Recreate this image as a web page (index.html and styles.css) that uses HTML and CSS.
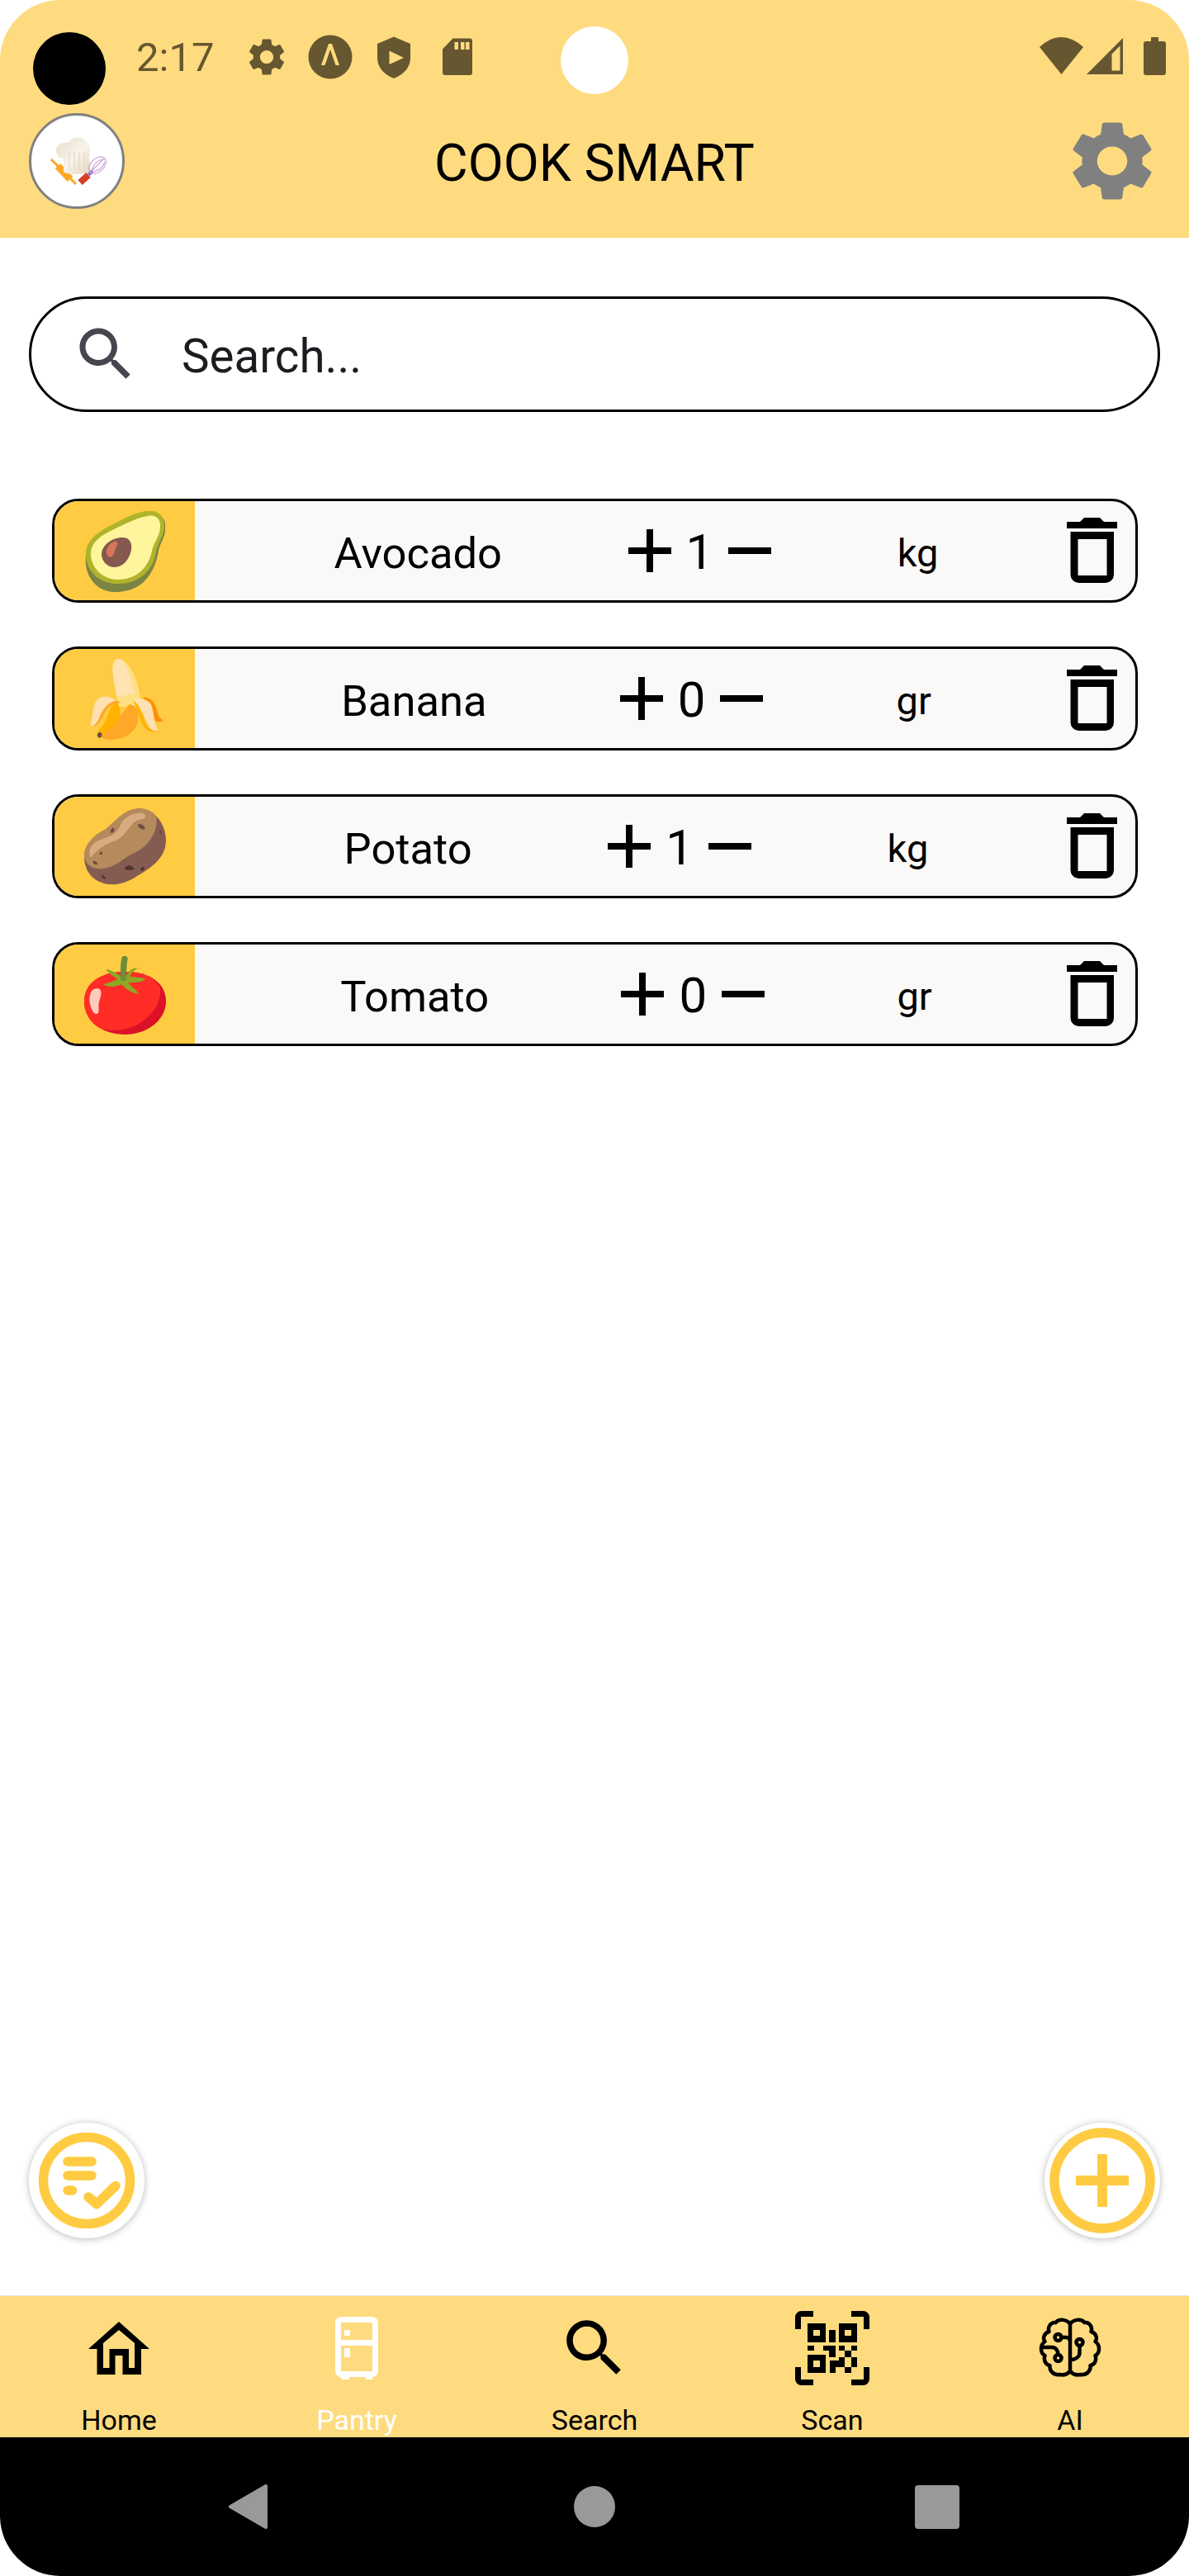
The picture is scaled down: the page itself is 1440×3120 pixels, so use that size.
FILE: index.html
```html
<!DOCTYPE html>
<html lang="en">
<head>
<meta charset="utf-8">
<title>Cook Smart</title>
<link rel="stylesheet" href="styles.css">
</head>
<body>
<svg class="defs" width="0" height="0">
  <symbol id="gear" viewBox="0 0 24 24" preserveAspectRatio="none"><path d="M19.14 12.94c.04-.3.06-.61.06-.94 0-.32-.02-.64-.07-.94l2.03-1.58c.18-.14.23-.41.12-.61l-1.92-3.32c-.12-.22-.37-.29-.59-.22l-2.39.96c-.5-.38-1.03-.7-1.62-.94l-.36-2.54c-.04-.24-.24-.41-.48-.41h-3.84c-.24 0-.43.17-.47.41l-.36 2.54c-.59.24-1.13.57-1.62.94l-2.39-.96c-.22-.08-.47 0-.59.22L2.74 8.87c-.12.21-.08.47.12.61l2.03 1.58c-.05.3-.09.63-.09.94s.02.64.07.94l-2.03 1.58c-.18.14-.23.41-.12.61l1.92 3.32c.12.22.37.29.59.22l2.39-.96c.5.38 1.03.7 1.62.94l.36 2.54c.05.24.24.41.48.41h3.84c.24 0 .44-.17.47-.41l.36-2.54c.59-.24 1.13-.56 1.62-.94l2.39.96c.22.08.47 0 .59-.22l1.92-3.32c.12-.22.07-.47-.12-.61l-2.01-1.58zM12 15.6c-1.98 0-3.6-1.62-3.6-3.6s1.62-3.6 3.6-3.6 3.6 1.62 3.6 3.6-1.62 3.6-3.6 3.6z"/></symbol>
  <symbol id="search" viewBox="0 0 24 24"><path d="M15.5 14h-.79l-.28-.27C15.41 12.59 16 11.11 16 9.5 16 5.91 13.09 3 9.5 3S3 5.91 3 9.5 5.91 16 9.5 16c1.61 0 3.09-.59 4.23-1.57l.27.28v.79l5 4.99L20.49 19l-4.99-5zm-6 0C7.01 14 5 11.99 5 9.5S7.01 5 9.5 5 14 7.01 14 9.5 11.99 14 9.5 14z"/></symbol>
  <symbol id="plus" viewBox="0 0 52 52"><path d="M22 0h8v22h22v8H30v22h-8V30H0v-8h22z"/></symbol>
  <symbol id="minus" viewBox="0 0 52 52"><path d="M0 22h52v8H0z"/></symbol>
  <symbol id="trash" viewBox="0 0 61 79"><path d="M0 5h16l5-5h19l5 5h16v8H0z"/><path fill-rule="evenodd" d="M4.500 17H57v52a10 10 0 0 1-10 10H14.500a10 10 0 0 1-10-10zM13.500 26v44h35V26z"/></symbol>
</svg>

<div class="screen">
  <header class="header">
    <div class="status">
      <span class="camera"></span>
      <span class="pill"></span>
      <span class="time">2:17</span>
      <div class="status-icons">
        <svg class="status-icon"><use href="#gear"/></svg>
        <svg class="status-icon" viewBox="0 0 54 54"><circle cx="27" cy="27" r="26.500"/><path class="cut" d="M25 11h4l9 26h-4.500L27 18l-6.500 19H16z"/></svg>
        <svg class="status-icon" viewBox="0 0 54 54"><path d="M27 2.500 47 11v17c0 12-8 20-20 25C15 48 7 40 7 28V11z"/><path class="cut" d="M21.500 19.500 39 28 21.500 36z"/></svg>
        <svg class="status-icon" viewBox="0 0 54 54"><path d="M21.500 4.500H42a3 3 0 0 1 3 3V46a3 3 0 0 1-3 3H12a3 3 0 0 1-3-3V17.500z"/><path class="cut" d="M23.500 9h4.500v9h-4.500zM31 9h4.500v9H31zM37 9h4.500v9H37z"/></svg>
      </div>
      <div class="status-right">
        <svg class="wifi" viewBox="0 0 53 45"><path d="M0 12Q26.500-12 53 12L26.500 45z"/></svg>
        <svg class="signal" viewBox="0 0 44 44"><path d="M0 44 44 0v44z"/><path class="cut" d="M30.500 19.500l10-10v30h-10z"/></svg>
        <svg class="battery" viewBox="0 0 27 46"><path d="M9 0h9v5h6a3 3 0 0 1 3 3v35a3 3 0 0 1-3 3H3a3 3 0 0 1-3-3V8a3 3 0 0 1 3-3h6z"/></svg>
      </div>
    </div>
    <div class="appbar">
      <div class="logo">
        <svg class="logo-art" viewBox="15 13 110 110">
          <defs>
            <linearGradient id="hat" x1="0" y1="0" x2="1" y2="1"><stop offset="0" stop-color="#e6dcc8"/><stop offset=".55" stop-color="#f8f4ec"/><stop offset="1" stop-color="#e2d4bb"/></linearGradient>
          </defs>
          <g transform="translate(27 23)">
            <path class="pin-thin" d="M12 43 42 73"/>
            <path class="pin" d="M20 51 35 67"/>
            <path fill="url(#hat)" d="M19 37C15 26 25 22 33 23C36 15 50 14 55 22C60 26 60 33 58 38L59 58C50 62 30 62 27 58L27 42C22 42 20 40 19 37Z"/>
            <path class="pleat" d="M34 34v22M40 34v22M46 34v22M52 34v22"/>
            <path class="handle" d="M47 71 57 62"/>
            <path class="neck" d="M57 62 62 57"/>
            <ellipse class="whisk" cx="68" cy="50" rx="12" ry="8" transform="rotate(-45 68 50)"/>
            <path class="whisk" d="M61 57C63 49 68 44 75 43M62 58C70 57 75 52 77 46M61 57 76 42"/>
          </g>
        </svg>
      </div>
      <h1 class="title">COOK SMART</h1>
      <svg class="settings"><use href="#gear"/></svg>
    </div>
  </header>

  <main class="main">
    <div class="searchbar">
      <svg class="searchbar-icon"><use href="#search"/></svg>
      <span class="searchbar-text">Search...</span>
    </div>

    <ul class="list">
      <li class="row">
        <div class="thumb">
          <svg class="food" viewBox="0 0 97 98">
            <path fill="#7c8444" d="M75 1C90-1 100 10 97 24C96 34 91 38 89 48C85 72 72 98 37 98C12 98-2 76 1 53C3 38 14 27 30 19C48 10 60 3 75 1Z"/>
            <path fill="#afb42b" d="M75 0C90-2 97 8 96 20C95 32 88 38 86 50C82 72 66 88 40 88C15 88 0 70 1 50C2 36 14 26 30 18C46 10 58 2 75 0Z"/>
            <path fill="#fff59d" d="M76 6C86 4 92 10 91 20C90 32 83 38 81 48C78 66 64 83 40 83C19 83 6 66 7 50C8 38 18 30 33 23C48 16 62 8 76 6Z"/>
            <path fill="#86594f" d="M45 32C54 32 57 38 56 47C54 58 46 68 36 68C26 68 20 60 20 52C20 42 32 32 45 32Z"/>
            <path fill="#d4775a" d="M36 37C40 36 40 40 38 43C36 47 35 52 33 55C29 57 25 54 26 48C27 43 31 38 36 37Z"/>
          </svg>
        </div>
        <div class="row-main">
          <span class="name">Avocado</span>
          <div class="qty"><svg class="qty-btn"><use href="#plus"/></svg><span class="count">1</span><svg class="qty-btn"><use href="#minus"/></svg></div>
          <span class="unit">kg</span>
        </div>
        <svg class="trash"><use href="#trash"/></svg>
      </li>

      <li class="row">
        <div class="thumb">
          <svg class="food food-banana" viewBox="155 620 197 295" preserveAspectRatio="none">
            <path fill="#ff8f00" d="M300 760C325 760 335 790 340 825C343 838 352 840 352 846C345 853 330 850 322 835C310 810 300 790 300 760Z"/>
            <path fill="#ffe082" d="M232 620C255 620 275 670 285 715C290 745 292 770 288 790L232 795C225 740 212 660 218 640C220 628 225 620 232 620Z"/>
            <path fill="#ffe3b3" d="M232 620C248 622 265 670 276 745L228 758C225 720 212 660 218 640C220 628 225 620 232 620Z"/>
            <path fill="#ffa726" d="M262 785C285 790 292 830 280 865C268 900 235 917 205 914C190 912 178 905 180 890C215 880 235 830 262 785Z"/>
            <path fill="#ffb300" d="M228 778C240 800 240 830 225 855C212 875 195 888 180 892C175 885 180 875 188 865C205 840 200 800 228 778Z"/>
            <path fill="#ffa726" d="M228 772C236 776 238 782 232 782C212 784 198 805 190 830C182 850 175 865 165 866C176 850 178 825 190 800C200 782 215 772 228 772Z"/>
            <path fill="#ffe0b2" d="M190 758C208 758 218 764 226 772C208 776 192 797 182 828C176 848 170 863 160 865C152 860 160 850 162 820C164 790 172 762 190 758Z"/>
            <path fill="#ffb300" d="M272 772C285 780 295 810 305 850C310 870 325 880 335 884C320 892 305 880 296 855C288 830 282 800 272 772Z"/>
            <path fill="#ffe0b2" d="M272 770C290 762 310 765 320 785C328 805 328 850 338 878C330 888 320 880 312 860C300 830 292 790 272 770Z"/>
            <ellipse fill="#6d4c41" cx="181" cy="898" rx="6" ry="10"/>
          </svg>
        </div>
        <div class="row-main">
          <span class="name">Banana</span>
          <div class="qty"><svg class="qty-btn"><use href="#plus"/></svg><span class="count">0</span><svg class="qty-btn"><use href="#minus"/></svg></div>
          <span class="unit">gr</span>
        </div>
        <svg class="trash"><use href="#trash"/></svg>
      </li>

      <li class="row">
        <div class="thumb">
          <svg class="food food-potato" viewBox="186 85 297 280">
            <path fill="#855c52" d="M385 85C440 85 483 140 483 200C483 270 420 305 370 335C330 360 280 370 240 350C205 335 186 300 186 260C186 210 230 175 265 160C300 130 335 85 385 85Z"/>
            <path fill="#b58a5c" d="M385 85C420 85 440 100 448 115C455 170 420 225 360 250C330 265 310 290 270 300C230 310 195 300 186 260C186 210 230 175 265 160C300 130 335 85 385 85Z"/>
            <path fill="#d8ac82" d="M400 102C412 105 412 122 395 124C350 125 345 190 290 205C260 215 225 240 212 262C200 260 200 225 230 205C270 185 300 190 320 140C335 110 375 98 400 102Z"/>
            <path fill="#6d4c41" d="M280 172C285 155 292 150 295 158C298 168 290 176 280 172ZM382 142C392 138 410 150 406 160C396 163 380 155 382 142ZM458 165C465 158 470 170 468 177C462 180 456 172 458 165ZM242 245C248 236 256 245 250 252C245 255 240 250 242 245ZM218 278C224 270 236 282 234 288C226 290 216 285 218 278Z"/>
            <path fill="#4e342e" d="M332 305C340 290 355 285 368 305C355 310 342 308 332 305ZM390 305C398 292 408 296 404 304C400 312 392 314 390 305ZM248 328C255 325 266 335 264 340C256 342 248 335 248 328Z"/>
          </svg>
        </div>
        <div class="row-main">
          <span class="name">Potato</span>
          <div class="qty"><svg class="qty-btn"><use href="#plus"/></svg><span class="count">1</span><svg class="qty-btn"><use href="#minus"/></svg></div>
          <span class="unit">kg</span>
        </div>
        <svg class="trash"><use href="#trash"/></svg>
      </li>

      <li class="row">
        <div class="thumb">
          <svg class="food food-tomato" viewBox="186 615 297 285">
            <path fill="#dc1128" d="M335 672C420 672 483 710 483 780C483 850 410 900 335 900C250 900 186 850 186 780C186 710 250 672 335 672Z"/>
            <path fill="#ff2d26" d="M335 672C400 672 440 690 462 730C470 800 400 885 290 885C270 885 250 880 240 875C205 855 186 820 186 780C186 710 250 672 335 672Z"/>
            <path fill="#ffccbc" d="M230 733C250 730 252 750 240 780C235 800 245 825 230 825C215 825 205 790 205 770C207 745 215 735 230 733Z"/>
            <path fill="#8fa823" d="M265 662C285 665 310 680 320 690C335 695 345 680 350 670C360 658 375 658 382 658C365 668 355 680 352 690C370 692 395 690 408 700C395 712 360 712 345 712C355 725 375 735 383 753C365 750 340 740 322 718C305 725 275 732 255 718C275 712 295 705 308 698C295 690 275 680 265 662Z"/>
            <path class="stem" d="M333 625C328 645 328 670 328 695"/>
          </svg>
        </div>
        <div class="row-main">
          <span class="name">Tomato</span>
          <div class="qty"><svg class="qty-btn"><use href="#plus"/></svg><span class="count">0</span><svg class="qty-btn"><use href="#minus"/></svg></div>
          <span class="unit">gr</span>
        </div>
        <svg class="trash"><use href="#trash"/></svg>
      </li>
    </ul>

    <button class="fab fab-left" type="button" aria-label="Shopping list">
      <svg class="fab-art" viewBox="0 0 140 140">
        <circle class="ring" cx="70" cy="70" r="52.500"/>
        <path class="ticks" d="M47 47h29M47 64h29M47 82h5.500M72 90l10 8.500 23-22"/>
      </svg>
    </button>
    <button class="fab fab-right" type="button" aria-label="Add item">
      <svg class="fab-art" viewBox="0 0 140 140">
        <circle class="ring" cx="70" cy="70" r="58"/>
        <path class="cross" d="M64 38h12v26h26v12H76v26H64V76H38V64h26z"/>
      </svg>
    </button>
  </main>

  <nav class="tabs">
    <div class="tab">
      <div class="tab-icon">
        <svg class="i-home" viewBox="0 0 74 64"><path fill-rule="evenodd" d="M37 0 74 33H64V64H41.500V41H32.500V64H10.500V33H0ZM37 10 18 26V56H25.500V33H49V56H56V26Z"/></svg>
      </div>
      <span class="tab-label">Home</span>
    </div>
    <div class="tab tab-active">
      <div class="tab-icon">
        <svg class="i-pantry" viewBox="0 0 52 76"><path d="M7 71H17V76H7zM37 71H45V76H37z"/><path fill-rule="evenodd" d="M7 0H45A7 7 0 0 1 52 7V66A7 7 0 0 1 45 73H7A7 7 0 0 1 0 66V7A7 7 0 0 1 7 0ZM7 7V28H45V7ZM7 35V66H45V35Z"/><path d="M11 16H18V23H11zM11 38H18V49H11z"/></svg>
      </div>
      <span class="tab-label">Pantry</span>
    </div>
    <div class="tab">
      <div class="tab-icon">
        <svg class="i-search"><use href="#search"/></svg>
      </div>
      <span class="tab-label">Search</span>
    </div>
    <div class="tab">
      <div class="tab-icon">
        <svg class="i-qr" viewBox="13 9 90 90">
          <path class="qr-corner" d="M16.500 31V16.500a4 4 0 0 1 4-4H35M81 12.500H95.500a4 4 0 0 1 4 4V31M16.500 77V91.500a4 4 0 0 0 4 4H35M81 95.500H95.500a4 4 0 0 0 4-4V77"/>
          <path fill-rule="evenodd" d="M28 24H50V47H28ZM35 32V39H43V32ZM66 24H88V47H66ZM73 32V39H81V32ZM28 62H50V84H28ZM35 69V77H43V69Z"/>
          <path d="M54 32H62V47H54zM28 51H36V57H28zM47 51H62V65H54V57H47zM66 51H73V57H66zM81 51H88V57H81zM73 57H81V65H73zM66 65H73V73H66zM81 65H88V77H81zM55 69H73V77H62V84H55zM73 77H81V84H73z"/>
        </svg>
      </div>
      <span class="tab-label">Scan</span>
    </div>
    <div class="tab">
      <div class="tab-icon">
        <svg class="i-ai" viewBox="9.500 11 76 76">
          <path class="brain" d="M47.500 18V78M47.500 20C44 14 34 13 30 18C24 17 20 24 22 29C16 31 14 37 17 41C11 45 11 55 17 58C15 64 18 69 23 70C22 77 28 82 35 81C40 82 45 81 47.500 76C50 81 55 82 60 81C67 82 73 77 72 70C77 69 80 64 78 58C84 55 84 45 78 41C81 37 79 31 73 29C75 24 71 17 65 18C61 13 51 14 47.500 20"/>
          <circle class="brain" cx="33" cy="36" r="4"/><circle class="brain" cx="33" cy="61" r="4"/><circle class="brain" cx="59" cy="42" r="4"/>
          <path class="brain" d="M37 36H43C45 36 47 38 47.500 40M33 57C33 52 30 48 26 48H13M59 46V54C59 60 54 63 48 63"/>
        </svg>
      </div>
      <span class="tab-label">AI</span>
    </div>
  </nav>

  <div class="sysnav">
    <svg class="nav-back" viewBox="0 0 49 56"><path d="M3 28 46 3V53Z"/></svg>
    <span class="nav-home"></span>
    <span class="nav-recent"></span>
  </div>
</div>
</body>
</html>
```

FILE: styles.css
```css
* { box-sizing: border-box; }

html, body {
  margin: 0;
  padding: 0;
  background: #fff;
}

body {
  font-family: Roboto, "Liberation Sans", sans-serif;
  color: #000;
}

.defs { position: absolute; }

.screen {
  width: 1440px;
  height: 3120px;
  display: flex;
  flex-direction: column;
  border-radius: 73px;
  overflow: hidden;
  background: #fff;
}

/* Header */
.header {
  height: 288px;
  background: #ffdb7f;
  flex: none;
}

.status {
  position: relative;
  height: 137px;
  display: flex;
  align-items: flex-start;
  padding: 41px 28px 0 165px;
  color: #665730;
}

.camera {
  position: absolute;
  left: 40px;
  top: 39px;
  width: 88px;
  height: 88px;
  border-radius: 50%;
  background: #000;
}

.pill {
  position: absolute;
  left: 679px;
  top: 32px;
  width: 82px;
  height: 82px;
  border-radius: 50%;
  background: #fff;
}

.time {
  font-size: 49px;
  line-height: 57px;
  width: 131px;
}

.status-icons {
  display: flex;
  gap: 23px;
  margin-top: 1px;
}

.status-icon {
  width: 54px;
  height: 54px;
  fill: #665730;
}

.cut { fill: #ffdb7f; }

.status-right {
  margin-left: auto;
  display: flex;
  align-items: flex-start;
  margin-top: 4px;
  fill: #665730;
}

.wifi { width: 53px; height: 45px; }
.signal { width: 44px; height: 44px; margin: 1px 25px 0 4px; }
.battery { width: 27px; height: 46px; }

.appbar {
  display: flex;
  align-items: center;
  justify-content: space-between;
  height: 116px;
  padding: 0 35px;
}

.logo {
  width: 116px;
  height: 116px;
  border-radius: 50%;
  background: #fff;
  border: 3px solid #808080;
  overflow: hidden;
}

.logo-art {
  display: block;
  width: 110px;
  height: 110px;
}

.pin-thin { stroke: #f9a825; stroke-width: 3; fill: none; }
.pin { stroke: #ffa726; stroke-width: 9; fill: none; }
.pleat { stroke: #e2d6bf; stroke-width: 1; fill: none; }
.handle { stroke: #d6402a; stroke-width: 8; fill: none; }
.neck { stroke: #8878c8; stroke-width: 4; fill: none; }
.whisk { stroke: #c9a2d8; stroke-width: 1.200; fill: none; }

.title {
  margin: 0;
  font-size: 62.500px;
  font-weight: 400;
  line-height: 72px;
  padding-top: 6px;
}

.settings {
  width: 122px;
  height: 116px;
  margin: 0 -3px;
  fill: #808080;
}

/* Main */
.main {
  position: relative;
  flex: 1;
  padding-top: 71px;
}

.searchbar {
  height: 140px;
  margin: 0 35px;
  border: 3px solid #000;
  border-radius: 70px;
  display: flex;
  align-items: center;
  padding-left: 48px;
}

.searchbar-icon {
  width: 84px;
  height: 84px;
  fill: #49454f;
  flex: none;
}

.searchbar-text {
  margin: 6px 0 0 50px;
  font-size: 56.500px;
  color: #1d1b20;
}

.list {
  list-style: none;
  margin: 105px 0 0;
  padding: 0 62px 0 63px;
  display: flex;
  flex-direction: column;
  gap: 53.500px;
}

.row {
  height: 125.500px;
  display: flex;
  align-items: center;
  border: 3px solid #000;
  border-radius: 32px;
  background: #faf9f7;
  overflow: hidden;
  padding-right: 22px;
}

.thumb {
  flex: none;
  align-self: stretch;
  width: 170px;
  background: #ffcb42;
  display: flex;
  align-items: center;
  justify-content: center;
}

.food {
  width: 97px;
  height: 98px;
  margin-top: 3px;
}

.food-banana { width: 88px; margin-left: 4px; }
.food-potato { width: 99px; height: 94px; }
.food-tomato { width: 99px; height: 95px; }

.stem {
  fill: none;
  stroke: #6b8e3a;
  stroke-width: 22;
  stroke-linecap: round;
}

.row-main {
  flex: 1;
  margin-left: 16px;
  display: flex;
  align-items: center;
  justify-content: space-evenly;
}

.name {
  font-size: 52.500px;
  margin-top: 6px;
}

.qty {
  display: flex;
  align-items: center;
  gap: 18px;
}

.qty-btn {
  width: 52px;
  height: 52px;
  fill: #000;
}

.count {
  font-size: 60px;
  margin-top: 4px;
}

.unit {
  font-size: 47px;
  margin-top: 6px;
}

.trash {
  flex: none;
  width: 61px;
  height: 79px;
  margin: 0 0 0 3px;
  fill: #000;
}

/* Floating buttons */
.fab {
  position: absolute;
  bottom: 69px;
  width: 140px;
  height: 140px;
  padding: 0;
  border: 0;
  border-radius: 50%;
  background: #fff;
  box-shadow: 0 1px 9px rgba(0, 0, 0, .28);
}

.fab-left { left: 35px; }
.fab-right { left: 1265px; }

.fab-art {
  display: block;
  width: 140px;
  height: 140px;
}

.ring {
  fill: none;
  stroke: #ffcb42;
  stroke-width: 11.500;
}

.ticks {
  fill: none;
  stroke: #ffcb42;
  stroke-width: 11.500;
  stroke-linecap: round;
  stroke-linejoin: round;
}

.cross { fill: #ffcb42; }

/* Tabs */
.tabs {
  flex: none;
  height: 172px;
  display: grid;
  grid-template-columns: repeat(5, 288px);
  background: #ffdb7f;
  border-top: 1px solid #e3e3e3;
}

.tab {
  display: flex;
  flex-direction: column;
  align-items: center;
  overflow: hidden;
}

.tab-icon {
  height: 126px;
  display: flex;
  align-items: center;
  justify-content: center;
  flex: none;
}

.tab-label {
  margin-top: 4px;
  font-size: 34px;
  line-height: 40px;
  color: #000;
}

.tab-active .tab-label { color: #fff; }

.i-home { width: 74px; height: 64px; fill: #000; }
.i-pantry { width: 52px; height: 76px; fill: #fff; }
.i-search { width: 90px; height: 90px; fill: #000; }
.i-qr { width: 90px; height: 90px; fill: #000; }
.i-ai { width: 76px; height: 76px; }

.qr-corner {
  fill: none;
  stroke: #000;
  stroke-width: 7;
}

.brain {
  fill: none;
  stroke: #000;
  stroke-width: 4.500;
  stroke-linecap: round;
  stroke-linejoin: round;
}

/* System navigation */
.sysnav {
  flex: none;
  height: 168px;
  background: #000;
  display: flex;
  align-items: center;
  padding-left: 276px;
}

.nav-back {
  width: 49px;
  height: 56px;
  fill: #999;
  stroke: #999;
  stroke-width: 4;
  stroke-linejoin: round;
}

.nav-home {
  width: 50px;
  height: 50px;
  margin-left: 370px;
  border-radius: 50%;
  background: #999;
}

.nav-recent {
  width: 54px;
  height: 53px;
  margin-left: 363px;
  border-radius: 4px;
  background: #999;
}
```
